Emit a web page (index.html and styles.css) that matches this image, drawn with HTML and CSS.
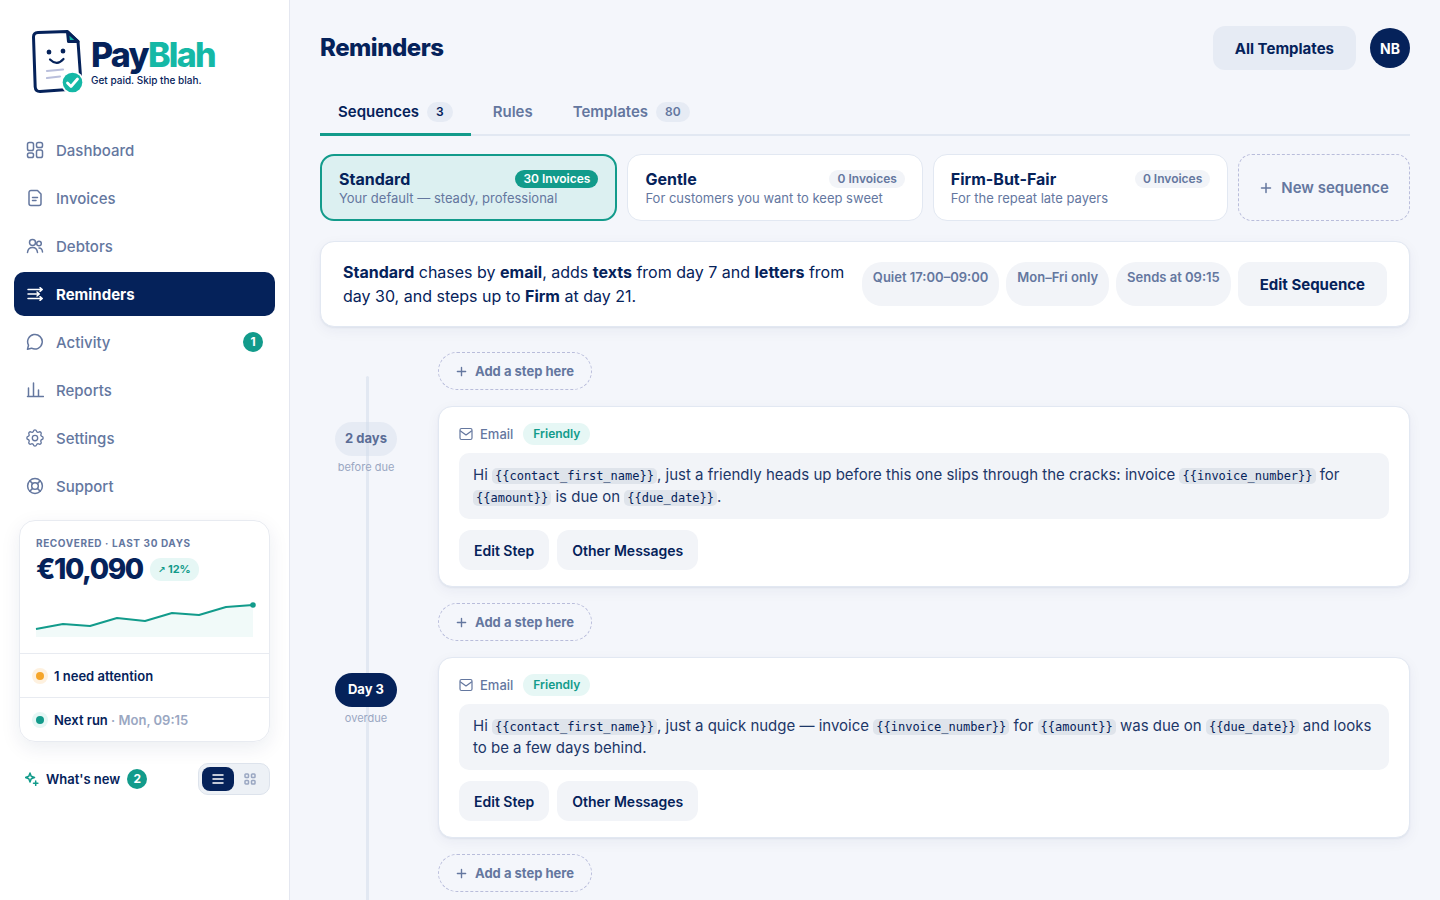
FILE: index.html
```html
<!DOCTYPE html>
<html lang="en">
<head>
  <meta charset="UTF-8" />
  <meta name="viewport" content="width=device-width, initial-scale=1.0"/>
  <title>Reminders | PayBlah</title>
  <link rel="stylesheet" href="styles.css">
</head>
<body>
  <aside class="sidebar">
    <a class="logo" href="#">
      <svg class="logo-mark" viewBox="0 0 52 64" fill="none">
        <path d="M6 2.500 35.500 1.500 46 11.500 49 53 43 59 8 61.500Q3.500 61.500 3.200 57L1.500 7Q1.500 2.700 6 2.500Z" fill="#fff" stroke="#05225a" stroke-width="3" stroke-linejoin="round"/>
        <path d="M35.500 2 36.500 11.500 46 11.500Z" fill="#15b8a6" stroke="#05225a" stroke-width="3" stroke-linejoin="round"/>
        <ellipse cx="17" cy="22" rx="2.400" ry="2.500" fill="#05225a"/>
        <ellipse cx="31" cy="21" rx="2.400" ry="2.500" fill="#05225a"/>
        <path d="M18 29.500Q25 36.500 31.500 29" stroke="#05225a" stroke-width="2.200" stroke-linecap="round"/>
        <path d="M15 41 31 39.500M15 48 28 46.500" stroke="#b9bfdc" stroke-width="2.200" stroke-linecap="round"/>
        <circle cx="40.500" cy="52.500" r="11.500" fill="#fff"/>
        <circle cx="40.500" cy="52.500" r="9.800" fill="#15b8a6"/>
        <path d="m35.500 53 3.500 3.500 6.500-7.500" stroke="#fff" stroke-width="2.800" stroke-linecap="round" stroke-linejoin="round"/>
      </svg>
      <span class="logo-words">
        <span class="logo-name">Pay<span class="logo-accent">Blah</span></span>
        <span class="logo-tagline">Get paid. Skip the blah.</span>
      </span>
    </a>

    <nav class="nav">
      <a class="nav-link" href="#">
        <svg class="icon" viewBox="0 0 18 18"><rect x="1.500" y="1.500" width="6" height="8" rx="1.800"/><rect x="10.500" y="1.500" width="6" height="5" rx="1.800"/><rect x="1.500" y="12" width="6" height="4.500" rx="1.800"/><rect x="10.500" y="9" width="6" height="7.500" rx="1.800"/></svg>
        Dashboard
      </a>
      <a class="nav-link" href="#">
        <svg class="icon" viewBox="0 0 18 18"><path d="M5 1.500h6.500l3.500 3.500v9.500a2 2 0 0 1-2 2H5a2 2 0 0 1-2-2v-11a2 2 0 0 1 2-2ZM6.500 8.500h5M6.500 11.500h3.500"/></svg>
        Invoices
      </a>
      <a class="nav-link" href="#">
        <svg class="icon" viewBox="0 0 18 18"><circle cx="6.500" cy="5.500" r="3"/><path d="M1.500 15.500c.3-3 2-5 5-5s4.700 2 5 5"/><circle cx="13" cy="6.500" r="2.300"/><path d="M13 11c2 0 3.300 1.500 3.500 4"/></svg>
        Debtors
      </a>
      <a class="nav-link active" href="#">
        <svg class="icon" viewBox="0 0 18 18"><path d="M2 4.500h13.500M2 9h10.500M2 13.500h13.500M14 2.700l2.300 1.800-2.300 1.800M11 7l2.300 2-2.300 2M14 11.700l2.300 1.800-2.300 1.800"/></svg>
        Reminders
      </a>
      <a class="nav-link" href="#">
        <svg class="icon" viewBox="0 0 18 18"><path d="M1.500 16.200l1-4a7.300 7.300 0 1 1 3 3Z"/></svg>
        Activity
        <span class="count-dot nav-count">1</span>
      </a>
      <a class="nav-link" href="#">
        <svg class="icon" viewBox="0 0 18 18"><path d="M1.500 15.500h16M2.500 15.500V7M7.500 15.500V2M12.500 15.500V9"/></svg>
        Reports
      </a>
      <a class="nav-link" href="#">
        <svg class="icon" viewBox="2 2 20 20"><path d="M10.300 4.300c.4-1.800 2.900-1.800 3.400 0a1.700 1.700 0 0 0 2.600 1.100c1.500-.9 3.300.8 2.400 2.400a1.700 1.700 0 0 0 1 2.500c1.800.5 1.800 3 0 3.400a1.700 1.700 0 0 0-1 2.600c.9 1.500-.9 3.300-2.400 2.400a1.700 1.700 0 0 0-2.600 1c-.5 1.800-3 1.800-3.400 0a1.700 1.700 0 0 0-2.600-1c-1.500.9-3.300-.9-2.400-2.400a1.700 1.700 0 0 0-1-2.600c-1.800-.4-1.800-2.900 0-3.400a1.700 1.700 0 0 0 1-2.500C4.400 6.200 6.200 4.500 7.700 5.400a1.700 1.700 0 0 0 2.600-1.100Z"/><circle cx="12" cy="12" r="3"/></svg>
        Settings
      </a>
      <a class="nav-link" href="#">
        <svg class="icon" viewBox="0 0 18 18"><circle cx="9" cy="9" r="7.400"/><circle cx="9" cy="9" r="3.300"/><path d="M3.800 3.800l2.800 2.800M14.200 3.800l-2.800 2.800M3.800 14.200l2.800-2.800M14.200 14.200l-2.800-2.800"/></svg>
        Support
      </a>
    </nav>

    <section class="recovered-card">
      <div class="recovered-top">
        <div class="recovered-label">Recovered · last 30 days</div>
        <div class="recovered-row">
          <span class="recovered-amount">€10,090</span>
          <span class="trend"><span class="trend-arrow">↗</span> 12%</span>
        </div>
        <svg class="sparkline" viewBox="0 0 217 40" fill="none">
          <path d="M0 29 27 24 54 26 81 18 109 21 136 13 163 15 190 7 217 5V37H0Z" fill="#f1faf9"/>
          <path d="M0 29 27 24 54 26 81 18 109 21 136 13 163 15 190 7 217 5" stroke="#129b8b" stroke-width="2" stroke-linejoin="round"/>
          <circle cx="217" cy="5" r="2.800" fill="#129b8b"/>
        </svg>
      </div>
      <a class="status-row" href="#"><span class="dot dot-warn"></span>1 need attention</a>
      <a class="status-row" href="#"><span class="dot dot-ok"></span><span>Next run <span class="status-time">· Mon, 09:15</span></span></a>
    </section>

    <div class="sidebar-footer">
      <button class="whats-new" type="button">
        <svg class="sparkle" viewBox="0 0 14 14"><path d="M5 1l1.200 3.300L9.500 5.500 6.200 6.700 5 10 3.800 6.700.5 5.500l3.300-1.200ZM10.700 9v4.400M8.500 11.200h4.400"/></svg>
        What's new
        <span class="count-dot">2</span>
      </button>
      <div class="view-toggle">
        <button class="view-btn active" type="button" aria-label="List view">
          <svg class="view-icon" viewBox="0 0 12 12"><path d="M1 2h10M1 6h10M1 10h10"/></svg>
        </button>
        <button class="view-btn" type="button" aria-label="Grid view">
          <svg class="view-icon" viewBox="0 0 12 12"><rect x="1" y="1" width="3.500" height="3.500" rx=".8"/><rect x="7.500" y="1" width="3.500" height="3.500" rx=".8"/><rect x="1" y="7.500" width="3.500" height="3.500" rx=".8"/><rect x="7.500" y="7.500" width="3.500" height="3.500" rx=".8"/></svg>
        </button>
      </div>
    </div>
  </aside>

  <main class="main">
    <header class="page-header">
      <h1>Reminders</h1>
      <div class="header-actions">
        <button class="btn btn-header" type="button">All Templates</button>
        <button class="avatar" type="button">NB</button>
      </div>
    </header>

    <nav class="tabs">
      <a class="tab active" href="#">Sequences <span class="tab-count">3</span></a>
      <a class="tab" href="#">Rules</a>
      <a class="tab" href="#">Templates <span class="tab-count">80</span></a>
    </nav>

    <div class="sequences">
      <button class="sequence active" type="button">
        <span class="sequence-head"><span class="sequence-name">Standard</span><span class="sequence-count">30 Invoices</span></span>
        <span class="sequence-text">Your default — steady, professional</span>
      </button>
      <button class="sequence" type="button">
        <span class="sequence-head"><span class="sequence-name">Gentle</span><span class="sequence-count">0 Invoices</span></span>
        <span class="sequence-text">For customers you want to keep sweet</span>
      </button>
      <button class="sequence" type="button">
        <span class="sequence-head"><span class="sequence-name">Firm-But-Fair</span><span class="sequence-count">0 Invoices</span></span>
        <span class="sequence-text">For the repeat late payers</span>
      </button>
      <button class="new-sequence" type="button">
        <svg class="plus" viewBox="0 0 12 12"><path d="M6 1.500v9M1.500 6h9"/></svg>
        New sequence
      </button>
    </div>

    <section class="summary">
      <p class="summary-text"><b>Standard</b> chases by <b>email</b>, adds <b>texts</b> from day 7 and <b>letters</b> from day 30, and steps up to <b>Firm</b> at day 21.</p>
      <div class="summary-actions">
        <span class="chip">Quiet 17:00–09:00</span>
        <span class="chip">Mon–Fri only</span>
        <span class="chip">Sends at 09:15</span>
        <button class="btn" type="button">Edit Sequence</button>
      </div>
    </section>

    <section class="timeline">
      <button class="add-step" type="button">
        <svg class="plus" viewBox="0 0 12 12"><path d="M6 1.500v9M1.500 6h9"/></svg>
        Add a step here
      </button>

      <div class="step">
        <div class="step-when before">
          <span class="day">2 days</span>
          <span class="day-note">before due</span>
        </div>
        <article class="step-card">
          <div class="step-head">
            <svg class="mail" viewBox="0 0 14 14"><rect x="1" y="1.500" width="12" height="11" rx="1.500"/><path d="M1.500 4 7 8l5.500-4"/></svg>
            <span class="channel">Email</span>
            <span class="tone">Friendly</span>
          </div>
          <p class="message">Hi <code>{{contact_first_name}}</code>, just a friendly heads up before this one slips through the cracks: invoice <code>{{invoice_number}}</code> for <code>{{amount}}</code> is due on <code>{{due_date}}</code>.</p>
          <div class="step-actions">
            <button class="btn btn-small" type="button">Edit Step</button>
            <button class="btn btn-small" type="button">Other Messages</button>
          </div>
        </article>
      </div>

      <button class="add-step" type="button">
        <svg class="plus" viewBox="0 0 12 12"><path d="M6 1.500v9M1.500 6h9"/></svg>
        Add a step here
      </button>

      <div class="step">
        <div class="step-when">
          <span class="day">Day 3</span>
          <span class="day-note">overdue</span>
        </div>
        <article class="step-card">
          <div class="step-head">
            <svg class="mail" viewBox="0 0 14 14"><rect x="1" y="1.500" width="12" height="11" rx="1.500"/><path d="M1.500 4 7 8l5.500-4"/></svg>
            <span class="channel">Email</span>
            <span class="tone">Friendly</span>
          </div>
          <p class="message">Hi <code>{{contact_first_name}}</code>, just a quick nudge — invoice <code>{{invoice_number}}</code> for <code>{{amount}}</code> was due on <code>{{due_date}}</code> and looks to be a few days behind.</p>
          <div class="step-actions">
            <button class="btn btn-small" type="button">Edit Step</button>
            <button class="btn btn-small" type="button">Other Messages</button>
          </div>
        </article>
      </div>

      <button class="add-step" type="button">
        <svg class="plus" viewBox="0 0 12 12"><path d="M6 1.500v9M1.500 6h9"/></svg>
        Add a step here
      </button>
    </section>
  </main>
</body>
</html>
```
FILE: styles.css
```css
:root {
  --navy: #05225a;
  --teal: #129b8b;
  --teal-soft: #e6f7f5;
  --muted: #64779f;
  --faint: #9aa7c2;
  --line: #e2e8f2;
  --fill: #f2f4f8;
  --fill-strong: #e6ebf4;
  --bg: #f4f6fb;
}

* {
  box-sizing: border-box;
  margin: 0;
  padding: 0;
}

body {
  display: flex;
  height: 100vh;
  font-family: 'Inter', sans-serif;
  font-size: 15px;
  color: var(--navy);
  background: var(--bg);
}

a {
  color: inherit;
  text-decoration: none;
}

button {
  border: none;
  background: none;
  color: inherit;
  font: inherit;
  cursor: pointer;
}

svg {
  flex-shrink: 0;
}

/* Sidebar */
.sidebar {
  flex: 0 0 290px;
  padding: 30px 14px 20px;
  background: #fff;
  border-right: 1px solid #e4e7f0;
}

.logo {
  display: flex;
  gap: 7px;
  padding-left: 18px;
  margin-bottom: 34px;
}

.logo-mark {
  width: 52px;
  height: 64px;
}

.logo-words {
  display: flex;
  flex-direction: column;
  padding-top: 6px;
}

.logo-name {
  font-size: 34px;
  line-height: 38px;
  font-weight: 800;
  letter-spacing: -0.05em;
}

.logo-accent {
  color: #15b8a6;
}

.logo-tagline {
  font-size: 10px;
  line-height: 12px;
  font-weight: 500;
}

.nav {
  display: flex;
  flex-direction: column;
  gap: 4px;
}

.nav-link {
  display: flex;
  align-items: center;
  gap: 12px;
  height: 44px;
  padding: 0 12px;
  border-radius: 10px;
  font-weight: 500;
  color: var(--muted);
}

.nav-link.active {
  background: var(--navy);
  color: #fff;
  font-weight: 700;
}

.icon,
.sparkle,
.plus,
.mail,
.view-icon {
  fill: none;
  stroke: currentColor;
  stroke-width: 1.5;
  stroke-linecap: round;
  stroke-linejoin: round;
}

.icon {
  width: 18px;
  height: 18px;
}

.count-dot {
  width: 20px;
  height: 20px;
  border-radius: 50%;
  background: var(--teal);
  color: #fff;
  font-size: 12px;
  line-height: 20px;
  font-weight: 700;
  text-align: center;
}

.nav-count {
  margin-left: auto;
}

.recovered-card {
  margin: 12px 5px 0;
  border: 1px solid #e8ebf1;
  border-radius: 16px;
  box-shadow: 0 6px 20px rgba(5, 34, 90, 0.08);
}

.recovered-top {
  padding: 15px 16px 13px;
}

.recovered-label {
  font-size: 10px;
  line-height: 14px;
  font-weight: 700;
  letter-spacing: 0.06em;
  text-transform: uppercase;
  color: var(--muted);
}

.recovered-row {
  display: flex;
  align-items: center;
  gap: 7px;
  margin: 1px 0 13px;
}

.recovered-amount {
  font-size: 28px;
  line-height: 36px;
  font-weight: 800;
  letter-spacing: -0.05em;
}

.trend {
  padding: 0 8px;
  border-radius: 11px;
  background: var(--teal-soft);
  color: var(--teal);
  font-size: 11px;
  line-height: 22px;
  font-weight: 700;
}

.trend-arrow {
  font-family: 'DejaVu Sans', sans-serif;
  font-size: 9px;
}

.sparkline {
  display: block;
  width: 100%;
  overflow: visible;
}

.status-row {
  display: flex;
  align-items: center;
  gap: 10px;
  height: 44px;
  padding: 0 16px;
  border-top: 1px solid #e8ebf1;
  font-size: 13px;
  font-weight: 600;
}

.status-time {
  color: var(--faint);
}

.dot {
  width: 8px;
  height: 8px;
  border-radius: 50%;
}

.dot-warn {
  background: #f5a52a;
  box-shadow: 0 0 0 4px #fef1df;
}

.dot-ok {
  background: var(--teal);
  box-shadow: 0 0 0 4px var(--teal-soft);
}

.sidebar-footer {
  display: flex;
  align-items: center;
  justify-content: space-between;
  padding: 21px 5px 0 11px;
}

.whats-new {
  display: flex;
  align-items: center;
  gap: 7px;
  font-size: 13px;
  font-weight: 600;
}

.sparkle {
  width: 14px;
  height: 14px;
  color: var(--teal);
}

.view-toggle {
  display: flex;
  padding: 3px;
  border: 1px solid #dde3ec;
  border-radius: 10px;
  background: #edf1f6;
}

.view-btn {
  display: flex;
  align-items: center;
  justify-content: center;
  width: 32px;
  height: 24px;
  border-radius: 8px;
  color: var(--faint);
}

.view-btn.active {
  background: var(--navy);
  color: #fff;
}

.view-icon {
  width: 12px;
  height: 12px;
}

/* Main */
.main {
  flex: 1;
  min-width: 0;
  padding: 26px 30px 0;
  overflow-y: auto;
  scrollbar-width: none;
}

.page-header,
.header-actions {
  display: flex;
  align-items: center;
  justify-content: space-between;
}

.header-actions {
  gap: 14px;
}

h1 {
  font-size: 24px;
  line-height: 32px;
  font-weight: 800;
  letter-spacing: -0.02em;
}

.btn {
  height: 44px;
  padding: 0 22px;
  border-radius: 12px;
  background: var(--fill);
  font-size: 15px;
  font-weight: 700;
}

.btn-header {
  background: var(--fill-strong);
}

.btn-small {
  height: 40px;
  padding: 0 15px;
  font-size: 14px;
  font-weight: 600;
}

.avatar {
  width: 40px;
  height: 40px;
  border-radius: 50%;
  background: var(--navy);
  color: #fff;
  font-size: 14px;
  font-weight: 700;
}

.tabs {
  display: flex;
  gap: 4px;
  margin-top: 20px;
  border-bottom: 2px solid var(--line);
}

.tab {
  display: flex;
  align-items: center;
  gap: 8px;
  height: 46px;
  padding: 0 18px;
  margin-bottom: -2px;
  border-bottom: 3px solid transparent;
  font-weight: 600;
  color: var(--muted);
}

.tab.active {
  border-bottom-color: var(--teal);
  color: var(--navy);
}

.tab-count {
  padding: 0 9px;
  border-radius: 10px;
  background: var(--fill-strong);
  font-size: 12px;
  line-height: 20px;
}

.sequences {
  display: flex;
  gap: 10px;
  margin-top: 18px;
}

.sequence {
  flex: 1;
  padding: 14px 17px 13px;
  border: 1px solid var(--line);
  border-radius: 14px;
  background: #fff;
  text-align: left;
}

.sequence.active {
  padding: 13px 17px 12px;
  border: 2px solid var(--teal);
  background: #dcf0f1;
}

.sequence-head {
  display: flex;
  align-items: center;
  justify-content: space-between;
}

.sequence-name {
  font-size: 16px;
  line-height: 20px;
  font-weight: 700;
}

.sequence-count {
  padding: 0 8px;
  border-radius: 9px;
  background: var(--fill);
  color: var(--muted);
  font-size: 12px;
  line-height: 18px;
  font-weight: 600;
}

.sequence.active .sequence-count {
  background: var(--teal);
  color: #fff;
}

.sequence-text {
  display: block;
  font-size: 13px;
  line-height: 18px;
  color: var(--muted);
}

.new-sequence,
.add-step {
  display: flex;
  align-items: center;
  border: 1px dashed #b9bddb;
  color: var(--muted);
  font-weight: 600;
}

.new-sequence {
  gap: 9px;
  padding: 0 20px 0 21px;
  border-radius: 14px;
}

.plus {
  width: 12px;
  height: 12px;
}

.summary {
  display: flex;
  align-items: center;
  justify-content: space-between;
  gap: 8px;
  margin-top: 20px;
  padding: 18px 22px;
  border: 1px solid var(--line);
  border-radius: 14px;
  background: #fff;
  box-shadow: 0 1px 2px rgba(5, 34, 90, 0.06), 0 4px 14px rgba(5, 34, 90, 0.05);
}

.summary-text {
  font-size: 16px;
  line-height: 24px;
}

.summary-actions {
  display: flex;
  flex-shrink: 0;
  gap: 7px;
}

.chip {
  padding: 6px 11px;
  border-radius: 20px;
  background: var(--fill);
  color: var(--muted);
  font-size: 13px;
  line-height: 18px;
  font-weight: 600;
}

/* Timeline */
.timeline {
  position: relative;
  display: flex;
  flex-direction: column;
  gap: 16px;
  margin-top: 25px;
  padding-bottom: 40px;
}

/* Vertical rail behind the day pills */
.timeline::before {
  content: '';
  position: absolute;
  top: 24px;
  bottom: 0;
  left: 46px;
  width: 3px;
  border-radius: 2px;
  background: var(--line);
}

.add-step {
  align-self: flex-start;
  gap: 8px;
  height: 38px;
  margin-left: 118px;
  padding: 0 17px;
  border-radius: 19px;
  font-size: 13px;
  font-weight: 700;
}

.add-step .plus {
  width: 11px;
  height: 11px;
}

.step {
  display: flex;
  gap: 26px;
}

.step-when {
  position: relative;
  display: flex;
  flex: 0 0 92px;
  flex-direction: column;
  align-items: center;
  padding-top: 16px;
}

.day {
  min-width: 62px;
  padding: 0 10px 2px;
  border-radius: 17px;
  background: var(--navy);
  color: #fff;
  font-size: 13px;
  line-height: 32px;
  font-weight: 700;
  text-align: center;
}

.before .day {
  background: rgba(211, 221, 234, 0.4);
  color: #5b6d96;
}

.day-note {
  margin-top: 4px;
  font-size: 11px;
  line-height: 14px;
  color: var(--faint);
}

.step-card {
  flex: 1;
  min-width: 0;
  padding: 16px 20px;
  border: 1px solid var(--line);
  border-radius: 14px;
  background: #fff;
  box-shadow: 0 1px 2px rgba(5, 34, 90, 0.06), 0 4px 14px rgba(5, 34, 90, 0.05);
}

.step-head {
  display: flex;
  align-items: center;
}

.mail {
  width: 14px;
  height: 14px;
  margin-right: 7px;
  stroke-width: 1.2;
  color: var(--muted);
}

.channel {
  margin-right: 10px;
  color: var(--muted);
  font-size: 13px;
  font-weight: 500;
}

.tone {
  padding: 0 10px;
  border-radius: 11px;
  background: var(--teal-soft);
  color: var(--teal);
  font-size: 12px;
  line-height: 22px;
  font-weight: 600;
}

.message {
  margin: 8px 0 11px;
  padding: 11px 14px;
  border-radius: 10px;
  background: var(--fill);
  color: #1d3768;
  line-height: 22px;
}

code {
  padding: 1px 3px;
  border-radius: 5px;
  background: #dfe4eb;
  color: var(--navy);
  font-family: 'DejaVu Sans Mono', monospace;
  font-size: 12px;
  line-height: 16px;
}

.step-actions {
  display: flex;
  gap: 8px;
}
```
